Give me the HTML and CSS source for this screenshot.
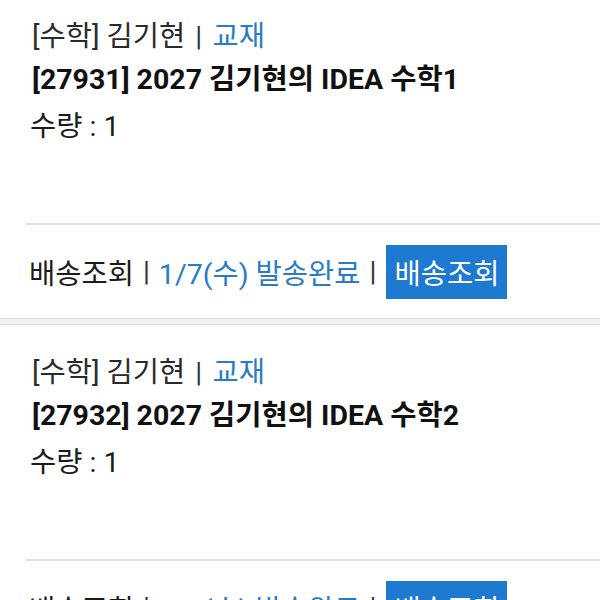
FILE: index.html
```html
<!DOCTYPE html>
<html lang="ko">
<head>
<meta charset="utf-8">
<link rel="stylesheet" href="styles.css">
</head>
<body>
<div class="list">
  <section class="card">
    <div class="card-body">
      <p class="meta">[수학] 김기현 <span class="bar">|</span> <span class="blue">교재</span></p>
      <p class="title">[27931] 2027 김기현의 IDEA 수학1</p>
      <p class="qty">수량 : 1</p>
    </div>
    <div class="card-foot">
      <span>배송조회</span><span class="bar">|</span><span class="blue">1/7(수) 발송완료</span><span class="bar">|</span><span class="btn">배송조회</span>
    </div>
  </section>
  <div class="sep"></div>
  <section class="card">
    <div class="card-body">
      <p class="meta">[수학] 김기현 <span class="bar">|</span> <span class="blue">교재</span></p>
      <p class="title">[27932] 2027 김기현의 IDEA 수학2</p>
      <p class="qty">수량 : 1</p>
    </div>
    <div class="card-foot">
      <span>배송조회</span><span class="bar">|</span><span class="blue">1/7(수) 발송완료</span><span class="bar">|</span><span class="btn">배송조회</span>
    </div>
  </section>
</div>
</body>
</html>
```
FILE: styles.css
```css
html, body {
  margin: 0;
  padding: 0;
  background: #fff;
  overflow: hidden;
  height: 600px;
}
body {
  font-family: Roboto, "Noto Sans CJK KR", sans-serif;
  color: #1c1c1c;
  font-size: 28.5px;
}
.list {
  margin-top: -11px;
}
.card-body {
  height: 236px;
  box-sizing: border-box;
  padding: 26px 0 0 7px;
  border-bottom: 2px solid #e0e0e0;
  margin-left: 25px;
}
.card-body p {
  margin: 0;
  line-height: 43px;
}
.meta {
  color: #2a2a2a;
}
.title {
  font-weight: 700;
  color: #111;
}
.qty {
  margin-top: 4px !important;
  margin-left: -2px !important;
}
.bar {
  color: #333;
  margin: 0 9px;
}
.meta .bar {
  margin: 0 3px;
}
.blue {
  color: #2b7cc6;
}
.card-foot {
  height: 93px;
  display: flex;
  align-items: center;
  padding-left: 29px;
}
.btn {
  background: #1d7ad0;
  color: #fff;
  height: 54px;
  width: 121px;
  display: flex;
  align-items: center;
  justify-content: center;
  margin-left: 1px;
}
.sep {
  height: 5px;
  background: #f2f2f2;
  border-top: 1px solid #dcdcdc;
  border-bottom: 1px solid #dcdcdc;
}
```
